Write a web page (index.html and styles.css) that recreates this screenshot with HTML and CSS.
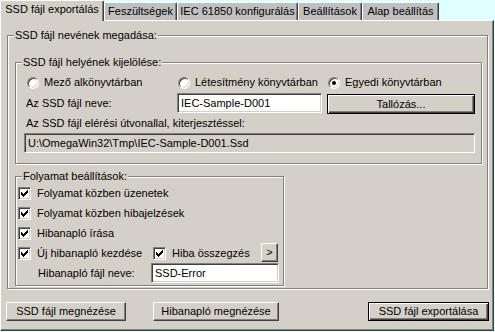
FILE: index.html
```html
<!DOCTYPE html>
<html lang="hu">
<head>
<meta charset="utf-8">
<title>SSD fájl exportálás</title>
<link rel="stylesheet" href="styles.css">
</head>
<body>
<div class="dialog">
  <div class="tabs">
    <div class="tab active w1">SSD fájl exportálás</div>
    <div class="tab w2">Feszültségek</div>
    <div class="tab w3">IEC 61850 konfigurálás</div>
    <div class="tab w4">Beállítások</div>
    <div class="tab w5">Alap beállítás</div>
  </div>
  <div class="panel">
    <fieldset class="group outer">
      <legend>SSD fájl nevének megadása:</legend>
      <fieldset class="group inner">
        <legend>SSD fájl helyének kijelölése:</legend>
        <div class="radios">
          <label class="radio"><span class="rbtn"></span>Mező alkönyvtárban</label>
          <label class="radio"><span class="rbtn"></span>Létesítmény könyvtárban</label>
          <label class="radio"><span class="rbtn on"></span>Egyedi könyvtárban</label>
        </div>
        <div class="name-row">
          <span>Az SSD fájl neve:</span>
          <div class="field">IEC-Sample-D001</div>
          <div class="btn default browse">Tallózás...</div>
        </div>
        <div class="path-label">Az SSD fájl elérési útvonallal, kiterjesztéssel:</div>
        <div class="field readonly path">U:\OmegaWin32\Tmp\IEC-Sample-D001.Ssd</div>
      </fieldset>
      <fieldset class="group process">
        <legend>Folyamat beállítások:</legend>
        <div class="cbrow"><label class="check"><span class="cbox"><svg width="7" height="7" viewBox="0 0 7 7"><path d="M0 2h1v3H0zM1 3h1v3H1zM2 4h1v3H2zM3 3h1v3H3zM4 2h1v3H4zM5 1h1v3H5zM6 0h1v3H6z"/></svg></span>Folyamat közben üzenetek</label></div>
        <div class="cbrow"><label class="check"><span class="cbox"><svg width="7" height="7" viewBox="0 0 7 7"><path d="M0 2h1v3H0zM1 3h1v3H1zM2 4h1v3H2zM3 3h1v3H3zM4 2h1v3H4zM5 1h1v3H5zM6 0h1v3H6z"/></svg></span>Folyamat közben hibajelzések</label></div>
        <div class="cbrow"><label class="check"><span class="cbox"><svg width="7" height="7" viewBox="0 0 7 7"><path d="M0 2h1v3H0zM1 3h1v3H1zM2 4h1v3H2zM3 3h1v3H3zM4 2h1v3H4zM5 1h1v3H5zM6 0h1v3H6z"/></svg></span>Hibanapló írása</label></div>
        <div class="cbrow">
          <label class="check c1"><span class="cbox"><svg width="7" height="7" viewBox="0 0 7 7"><path d="M0 2h1v3H0zM1 3h1v3H1zM2 4h1v3H2zM3 3h1v3H3zM4 2h1v3H4zM5 1h1v3H5zM6 0h1v3H6z"/></svg></span>Új hibanapló kezdése</label>
          <label class="check c2"><span class="cbox"><svg width="7" height="7" viewBox="0 0 7 7"><path d="M0 2h1v3H0zM1 3h1v3H1zM2 4h1v3H2zM3 3h1v3H3zM4 2h1v3H4zM5 1h1v3H5zM6 0h1v3H6z"/></svg></span>Hiba összegzés</label>
          <div class="btn small">&gt;</div>
        </div>
        <div class="logrow">
          <span class="loglabel">Hibanapló fájl neve:</span>
          <div class="field logfield">SSD-Error</div>
        </div>
      </fieldset>
    </fieldset>
    <div class="buttons">
      <div class="btn b1">SSD fájl megnézése</div>
      <div class="btn b2">Hibanapló megnézése</div>
      <div class="btn default b3">SSD fájl exportálása</div>
    </div>
  </div>
</div>
</body>
</html>
```
FILE: styles.css
```css
* { box-sizing: border-box; }
html, body { margin: 0; padding: 0; }
body {
  background: #e0ffff;
  font: 11px/13px "Liberation Sans", Arial, sans-serif;
  color: #000;
  width: 495px;
  height: 332px;
  overflow: hidden;
}
.dialog { width: 495px; }

/* tabs */
.tabs { display: flex; align-items: flex-end; height: 20px; }
.tab {
  height: 18px;
  padding-top: 2px;
  text-align: center;
  white-space: nowrap;
  background: #c0c0c0;
  border-top: 1px solid #fff;
  border-left: 1px solid #fff;
  border-right: 1px solid #404040;
  box-shadow: inset -1px 0 #808080;
  border-radius: 2px 2px 0 0;
}
.tab.active {
  height: 21px;
  margin-bottom: -1px;
  padding-top: 2px;
  background: #d4d0c8;
  position: relative;
  z-index: 1;
}
.w1 { width: 104px; }
.w2 { width: 73px; }
.w3 { width: 121px; }
.w4 { width: 64px; }
.w5 { width: 77px; }

/* panel */
.panel {
  width: 494px;
  height: 311px;
  background: #d4d0c8;
  border-top: 1px solid #fff;
  border-left: 1px solid #fff;
  border-right: 1px solid #404040;
  border-bottom: 1px solid #404040;
  box-shadow: inset -1px -1px #808080;
}

/* group boxes */
.group {
  margin: 0;
  padding: 0;
  min-width: 0;
  border: 1px solid #808080;
  box-shadow: inset 1px 1px #fff, 1px 1px #fff;
}
.group > legend {
  padding: 0 1px;
  margin-left: 6px;
  line-height: 13px;
  background: #d4d0c8;
}
.outer { margin: 8px 0 0 6px; width: 481px; padding-bottom: 2px; }
.inner { margin: 14px 0 0 7px; width: 467px; padding-bottom: 10px; }
.process { margin: 6px 0 0 7px; width: 269px; padding-bottom: 2px; }

/* radios */
.radios {
  display: grid;
  grid-template-columns: 151px 150px auto;
  margin: 6px 0 0 11px;
  height: 15px;
  align-items: center;
}
.radio { display: flex; align-items: center; gap: 5px; white-space: nowrap; }
.rbtn {
  width: 12px; height: 12px;
  border-radius: 50%;
  background: #fff;
  border: 1px solid;
  border-color: #808080 #fff #fff #808080;
  box-shadow: inset 1px 1px #404040, inset -1px -1px #d4d0c8;
  display: flex; align-items: center; justify-content: center;
}
.rbtn.on::after {
  content: "";
  width: 4px; height: 4px;
  border-radius: 50%;
  background: #000;
}

/* fields */
.field {
  height: 20px;
  padding: 0 3px;
  display: flex; align-items: center;
  white-space: nowrap;
  overflow: hidden;
  background: #fff;
  border: 1px solid;
  border-color: #808080 #fff #fff #808080;
  box-shadow: inset 1px 1px #404040, inset -1px -1px #d4d0c8;
}
.field.readonly { background: #d4d0c8; }

.name-row {
  display: grid;
  grid-template-columns: 146px 145px 148px;
  column-gap: 5px;
  margin: 3px 0 0 10px;
  align-items: start;
}
.name-row > span { line-height: 20px; }
.browse { margin-top: 1px; }
.path-label { margin: 3px 0 0 10px; }
.path { margin: 3px 0 0 8px; width: 451px; }

/* buttons */
.btn {
  display: flex; align-items: center; justify-content: center;
  height: 20px;
  white-space: nowrap;
  background: #d4d0c8;
  border: 1px solid;
  border-color: #fff #404040 #404040 #fff;
  box-shadow: inset -1px -1px #808080;
}
.btn.default {
  border-color: #000;
  box-shadow: inset 1px 1px #fff, inset -1px -1px #404040, inset -2px -2px #808080;
}

/* checkboxes */
.cbrow { display: flex; align-items: center; height: 20px; padding-left: 2px; }
.check { display: flex; align-items: center; gap: 6px; white-space: nowrap; }
.cbox {
  width: 13px; height: 13px;
  background: #fff;
  border: 1px solid;
  border-color: #808080 #fff #fff #808080;
  box-shadow: inset 1px 1px #404040, inset -1px -1px #d4d0c8;
  display: flex; align-items: center; justify-content: center;
}
.cbox svg { display: block; shape-rendering: crispEdges; }
.c1 { width: 135px; }
.c2 { width: 108px; }
.btn.small { width: 17px; height: 19px; margin-top: -2px; }

.logrow { display: flex; align-items: center; height: 20px; padding-left: 22px; }
.loglabel { width: 113px; }
.logfield { width: 128px; }

.buttons { display: flex; margin: 13px 0 0 5px; }
.buttons .btn { height: 19px; }
.b1 { width: 120px; }
.b2 { width: 126px; margin-left: 27px; }
.b3 { width: 121px; margin-left: 89px; }
```
